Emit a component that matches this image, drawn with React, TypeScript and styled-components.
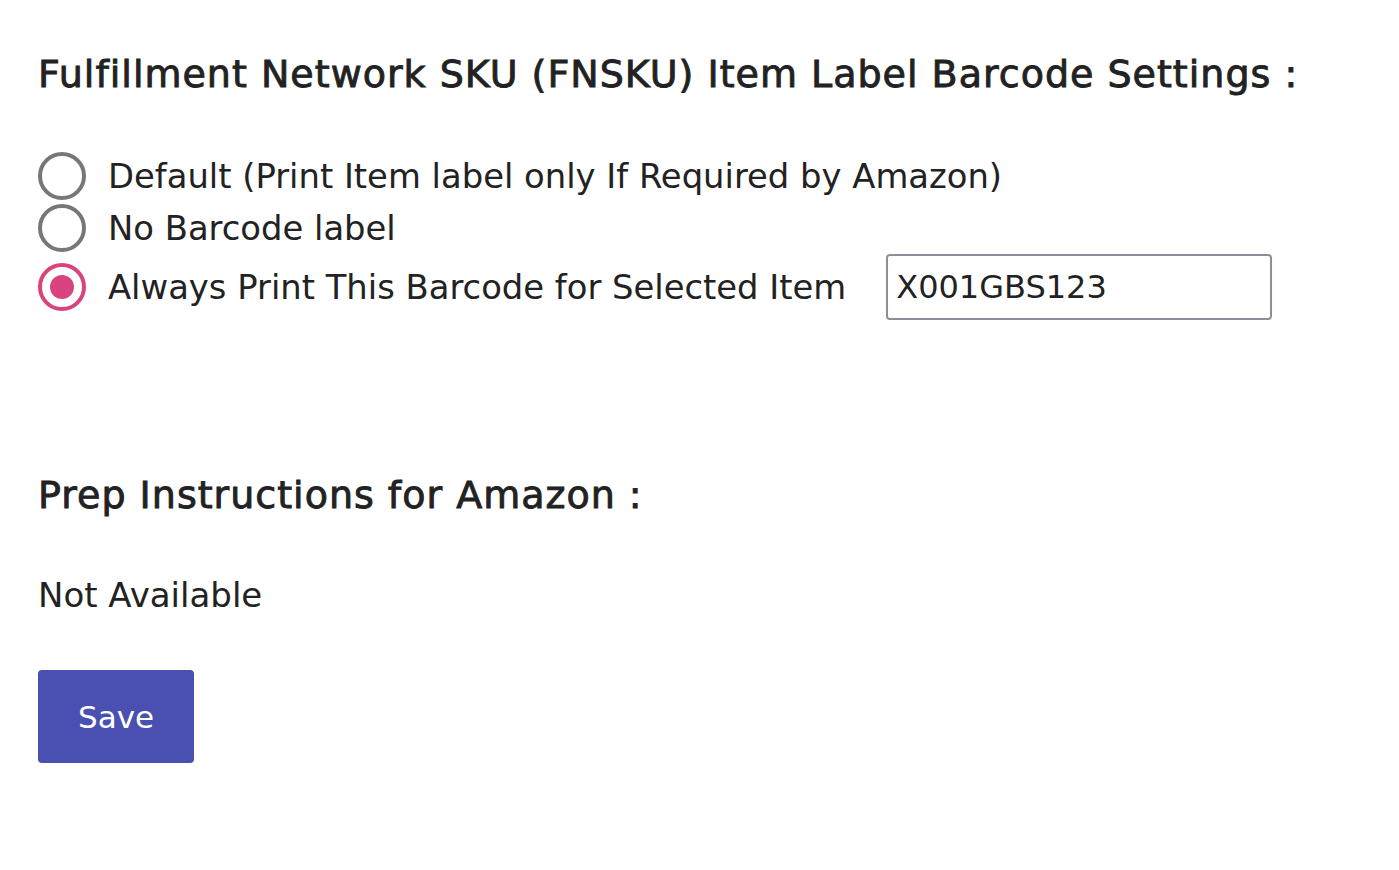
import React, { useState } from 'react'
import styled, { createGlobalStyle } from 'styled-components'

const GlobalStyle = createGlobalStyle`
    body {
        margin: 0;
        background: #ffffff;
        font-family: "DejaVu Sans", "Liberation Sans", sans-serif;
        color: #222222;
    }
`;

const Page = styled.div`
    padding: 52px 38px 40px 38px;
    display: flex;
    flex-direction: column;
    align-items: flex-start;
`;

const Heading = styled.h2`
    margin: 0;
    font-size: 38px;
    font-weight: 400;
    line-height: 44px;
    letter-spacing: 1px;
    color: #222222;
    -webkit-text-stroke: 0.9px #222222;
`;

const Options = styled.div`
    display: flex;
    flex-direction: column;
    margin-top: 54px;
`;

const Option = styled.label`
    display: flex;
    align-items: center;
    gap: 22px;
    height: 52px;
    font-size: 33.8px;
    cursor: pointer;
`;

const Radio = styled.span<{ $checked: boolean }>`
    width: 48px;
    height: 48px;
    flex-shrink: 0;
    box-sizing: border-box;
    border-radius: 50%;
    border: 4px solid ${p => (p.$checked ? '#d9437e' : '#777777')};
    display: flex;
    align-items: center;
    justify-content: center;

    &::after {
        content: '';
        width: 24px;
        height: 24px;
        border-radius: 50%;
        background: #d9437e;
        display: ${p => (p.$checked ? 'block' : 'none')};
    }
`;

const BarcodeRow = styled(Option)`
    height: 66px;
`;

const BarcodeInput = styled.input`
    margin-left: 18px;
    width: 386px;
    height: 66px;
    box-sizing: border-box;
    border: 2px solid #8e8e9a;
    border-radius: 4px;
    padding: 0 8px;
    font-family: "DejaVu Sans", sans-serif;
    font-size: 32px;
    color: #222222;
    outline: none;
`;

const Section = styled.div`
    margin-top: 153px;
`;

const Text = styled.p`
    margin: 58px 0 0 0;
    font-size: 34px;
    line-height: 40px;
`;

const SaveButton = styled.button`
    margin-top: 55px;
    width: 156px;
    height: 93px;
    border: none;
    border-radius: 4px;
    background: #4a50b2;
    color: #ffffff;
    font-family: "DejaVu Sans", sans-serif;
    font-size: 31px;
    cursor: pointer;
`;

const options = [
    { id: 'default', label: 'Default (Print Item label only If Required by Amazon)' },
    { id: 'none', label: 'No Barcode label' },
]

const App: React.FC = () => {
    const [choice, setChoice] = useState('always');
    const [barcode, setBarcode] = useState('X001GBS123');

    return (
        <Page>
            <GlobalStyle />
            <Heading>Fulfillment Network SKU (FNSKU) Item Label Barcode Settings :</Heading>
            <Options>
                {options.map((item) =>
                    <Option key={item.id} onClick={() => setChoice(item.id)}>
                        <Radio $checked={choice === item.id} />
                        {item.label}
                    </Option>
                )}
                <BarcodeRow onClick={() => setChoice('always')}>
                    <Radio $checked={choice === 'always'} />
                    Always Print This Barcode for Selected Item
                    <BarcodeInput value={barcode} onChange={e => setBarcode(e.target.value)} />
                </BarcodeRow>
            </Options>
            <Section>
                <Heading>Prep Instructions for Amazon :</Heading>
                <Text>Not Available</Text>
            </Section>
            <SaveButton>Save</SaveButton>
        </Page>
    )
}

export default App
